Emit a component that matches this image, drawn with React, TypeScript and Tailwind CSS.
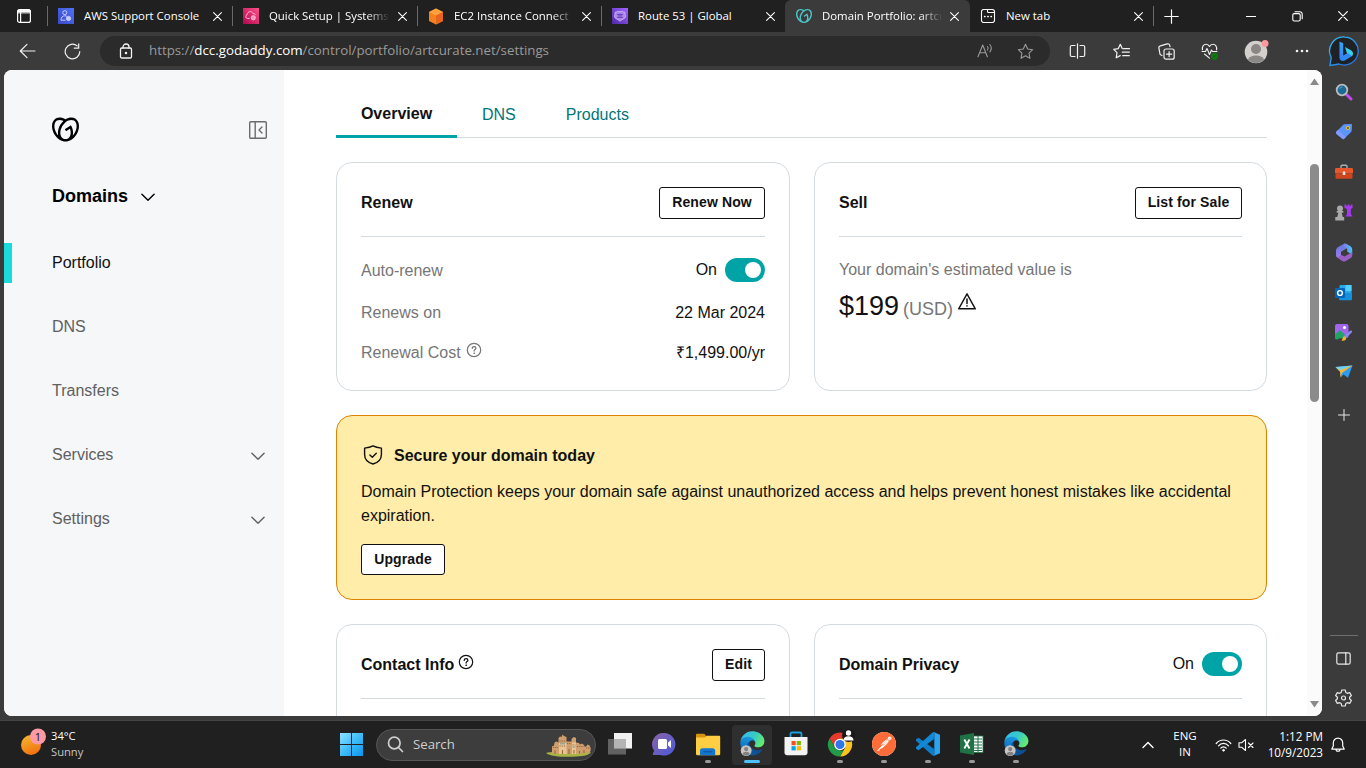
import React from "react";
import { SiGodaddy, SiPostman } from "react-icons/si";

type P = { children?: React.ReactNode; className?: string };

function Svg({ w, h, vb, children, className = "", sw = 1.2 }: P & { w: number; h: number; vb?: string; sw?: number }) {
  return (
    <svg
      width={w}
      height={h}
      viewBox={vb ?? `0 0 ${w} ${h}`}
      fill="none"
      stroke="currentColor"
      strokeWidth={sw}
      strokeLinecap="round"
      strokeLinejoin="round"
      className={`shrink-0 ${className}`}
    >
      {children}
    </svg>
  );
}

const Cell = ({ children, className = "" }: P) => (
  <div className={`flex shrink-0 items-center justify-center ${className}`}>{children}</div>
);

/* ---------- browser tabs ---------- */

const SupportIcon = () => (
  <svg width="16" height="16" className="shrink-0">
    <defs>
      <linearGradient id="sup" x1="0" y1="1" x2="1" y2="0">
        <stop offset="0" stopColor="#3b48cc" />
        <stop offset="1" stopColor="#4d72f3" />
      </linearGradient>
    </defs>
    <rect width="16" height="16" fill="url(#sup)" />
    <g fill="none" stroke="#c3ccfb" strokeWidth="1">
      <circle cx="6.8" cy="4.6" r="2" />
      <path d="M3 12.2c0-3 1.6-4.4 3.8-4.4 1 0 1.800.2 2.200.7M3 12.200h4.500" />
      <circle cx="10.500" cy="10.500" r="2.100" fill="#c3ccfb" />
    </g>
  </svg>
);

const SystemsIcon = () => (
  <svg width="16" height="16" className="shrink-0">
    <defs>
      <linearGradient id="sys" x1="0" y1="1" x2="1" y2="0">
        <stop offset="0" stopColor="#b0084d" />
        <stop offset="1" stopColor="#ff4f8b" />
      </linearGradient>
    </defs>
    <rect width="16" height="16" fill="url(#sys)" />
    <g fill="none" stroke="#ffb8d0" strokeWidth="1">
      <path d="M6.500 10.500H4.600a2 2 0 0 1-.4-3.900c.1-3.400 4.800-4 5.700-1 1.500-.5 2.300.5 2.300 1.500" />
      <circle cx="10.300" cy="9.800" r="2.100" fill="#f596b9" />
    </g>
  </svg>
);

const Ec2Icon = () => (
  <svg width="16" height="17" viewBox="0 0 16 17" className="shrink-0">
    <path d="M8 .5 15 4v9l-7 3.500L1 13V4z" fill="#f58220" />
    <path d="M8 .5 15 4 8 7.400 1 4z" fill="#ffa13d" />
    <path d="M8 7.400 15 4v9l-7 3.500z" fill="#e8651f" />
  </svg>
);

const RouteIcon = () => (
  <svg width="16" height="16" className="shrink-0">
    <defs>
      <linearGradient id="r53" x1="0" y1="1" x2="1" y2="0">
        <stop offset="0" stopColor="#4d27a8" />
        <stop offset="1" stopColor="#a166ff" />
      </linearGradient>
    </defs>
    <rect width="16" height="16" fill="url(#r53)" />
    <path d="M3 4.200c1.300.3 2-.2 2.600-1.100 1.500.7 3.300.7 4.800 0 .6.900 1.300 1.400 2.600 1.100-.6 1.500.7 2.600.5 4.300-.2 2.300-3.500 2.600-5.500 4.700-2-2.100-5.300-2.400-5.500-4.700C2.300 6.800 3.600 5.700 3 4.200z" fill="#a987e6" stroke="#d3c0f7" strokeWidth=".8" />
    <path d="M5.200 6.400h5.600M5.200 9.400h5.600M6 7.900h4" stroke="#6336b8" strokeWidth=".9" />
  </svg>
);

const NewTabIcon = () => (
  <Svg w={16} h={16} className="text-white" sw={1.1}>
    <rect x="1.500" y="1.500" width="13" height="13" rx="2.200" />
    <path d="M7.500 1.800v1.700c0 .7.400 1 1 1h6" />
    <path d="M4.700 8.500h.2M7.900 8.500h.2M11.100 8.500h.2" strokeWidth="1.700" />
  </Svg>
);

type TabItem = { icon: React.ReactNode; title: string; width: string; gap: string; lead?: string; active?: boolean; fade?: boolean; sep?: boolean };

const tabs: TabItem[] = [
  { icon: <SupportIcon />, title: "AWS Support Console", width: "w-[185px]", gap: "ml-[9px]", sep: true },
  { icon: <SystemsIcon />, title: "Quick Setup | Systems", width: "w-[185px]", gap: "ml-[9px]", fade: true, sep: true },
  { icon: <Ec2Icon />, title: "EC2 Instance Connect |", width: "w-[184px]", gap: "ml-[8px]", fade: true, sep: true },
  { icon: <RouteIcon />, title: "Route 53 | Global", width: "w-[184px]", gap: "ml-[8px]", sep: true },
  { icon: <SiGodaddy size={16} color="#4cc5c9" className="shrink-0" />, title: "Domain Portfolio: artcu", width: "w-[185px]", gap: "ml-[8px]", active: true, fade: true },
  { icon: <NewTabIcon />, title: "New tab", width: "w-[183px]", gap: "ml-[8px]", lead: "ml-[9px]" },
];

const Close = ({ s = 9 }: { s?: number }) => (
  <Svg w={s} h={s} vb="0 0 9 9" className="text-white" sw={1.1}>
    <path d="M.6.6l7.800 7.800M8.400.6.6 8.400" />
  </Svg>
);

const TabStrip = () => (
  <div className="flex h-8 shrink-0 items-stretch bg-[#202020] text-white">
    <Cell className="w-[47px]">
      <Svg w={16} h={16} sw={1.200}>
        <rect x="1.600" y="1.600" width="12.800" height="12.800" rx="2" />
        <path d="M1.600 4.600V3.600a2 2 0 0 1 2-2h8.800a2 2 0 0 1 2 2v1z" fill="currentColor" strokeWidth=".8" />
        <path d="M4.600 4v10.400" />
      </Svg>
    </Cell>
    {tabs.map((t) => (
      <div
        key={t.title}
        className={`flex shrink-0 items-center ${t.width} ${t.active ? "rounded-t-md bg-[#3b3b3b]" : ""}`}
      >
        <div className={`h-[20px] w-px ${t.sep ? "bg-[#6a6a6a]" : ""}`} />
        <Cell className={`w-4 ${t.lead ?? "ml-[10px]"}`}>{t.icon}</Cell>
        <div
          className={`ml-[10px] w-[120px] whitespace-nowrap text-[11.400px] leading-4 ${
            t.fade ? "[mask-image:linear-gradient(to_right,black_98px,transparent_121px)]" : ""
          }`}
        >
          {t.title}
        </div>
        <div className={t.gap}>
          <Close />
        </div>
      </div>
    ))}
    <div className="h-[20px] w-px self-center bg-[#6a6a6a]" />
    <Cell className="w-[35px]">
      <Svg w={15} h={15} sw={1.200}>
        <path d="M7.500.8v13.400M.8 7.500h13.400" />
      </Svg>
    </Cell>
    <div className="flex-1" />
    <Cell className="w-[46px]">
      <Svg w={10} h={10} sw={1}>
        <path d="M0 5.500h10" />
      </Svg>
    </Cell>
    <Cell className="w-[46px]">
      <Svg w={11} h={11} sw={1.100}>
        <rect x=".8" y="2.600" width="7.400" height="7.400" rx="1.500" />
        <path d="M3 .7h4.800a2.400 2.400 0 0 1 2.400 2.400v4.700" />
      </Svg>
    </Cell>
    <Cell className="w-[46px]">
      <Close s={10} />
    </Cell>
  </div>
);

/* ---------- toolbar ---------- */

const star = "M8.500 1.300l2.200 4.700 5 .7-3.700 3.500.9 5.100-4.400-2.500-4.500 2.500.9-5.100L1.300 6.700l5-.7z";

const Bing = () => (
  <svg width="32" height="32" viewBox="0 0 32 32" className="shrink-0">
    <defs>
      <linearGradient id="bg1" x1="0" y1="0" x2="1" y2="1">
        <stop offset="0" stopColor="#35c7f4" />
        <stop offset="1" stopColor="#2364e0" />
      </linearGradient>
      <linearGradient id="bg2" x1="0" y1="0" x2="0" y2="1">
        <stop offset="0" stopColor="#31a8f5" />
        <stop offset="1" stopColor="#3f7af5" />
      </linearGradient>
    </defs>
    <path d="M16.500 2a14 14 0 1 1-5.500 27L2 30.500l1.200-8A14 14 0 0 1 16.500 2z" fill="#202124" stroke="url(#bg1)" strokeWidth="1.300" />
    <path d="M11.500 6.500l3.700 1.800V21l-1.700 4.500c-1.300-.6-2-1.500-2-3z" fill="url(#bg2)" />
    <path d="M17 12l6 3.200c2.800 1.800 2.300 4.500.8 6L19 18.500z" fill="#35d0e8" />
    <path d="M11.800 22.500l7.700-4.400 4.300 3.100-7 4.300c-2.400 1.200-4.600.2-5-3z" fill="#3188f5" />
  </svg>
);

const Toolbar = () => (
  <div className="flex h-[38px] shrink-0 items-center bg-[#3b3b3b] text-[#f2f2f2]">
    <Cell className="w-[44px] pl-[11px]">
      <Svg w={17} h={16} sw={1.200}>
        <path d="M16 8H1.500M8 1.300 1.300 8 8 14.700" />
      </Svg>
    </Cell>
    <Cell className="w-[56px]">
      <Svg w={17} h={17} sw={1.200}>
        <path d="M15.800 8.500A7.300 7.300 0 1 1 13.200 2.900M14.700.8v4.400h-4.400" />
      </Svg>
    </Cell>
    <div className="flex h-[30px] w-[950px] items-center rounded-full bg-[#2b2b2b]">
      <Cell className="w-[49px] pl-[3px]">
        <Svg w={14} h={16} sw={1.300}>
          <rect x="1.500" y="5" width="11" height="10" rx="1.200" />
          <path d="M4 5V4a3 3 0 0 1 6 0v1" />
          <circle cx="7" cy="10" r=".6" fill="currentColor" />
        </Svg>
      </Cell>
      <div className="flex-1 whitespace-nowrap text-[13.300px] text-[#9a9a9a]">
        https://<span className="text-white">dcc.godaddy.com</span>/control/portfolio/artcurate.net/settings
      </div>
      <Cell className="w-[40px] text-[#9a9a9a]">
        <Svg w={17} h={16} sw={1.100}>
          <path d="M1 13.800 5.700 2l4.700 11.800M2.700 9.800h6M10.500 3.500c.9 1 .9 2.300 0 3.500M12.800 1.500c1.900 2.200 1.900 4.900.1 7.300" />
        </Svg>
      </Cell>
      <Cell className="mr-[5px] w-[40px] text-[#9a9a9a]">
        <Svg w={17} h={17} sw={1.100}>
          <path d={star} />
        </Svg>
      </Cell>
    </div>
    <Cell className="ml-[5px] w-[44px]">
      <Svg w={17} h={16} sw={1.200}>
        <path d="M6 2.500H2.800C1.800 2.500 1.300 3 1.300 4v8c0 1 .5 1.500 1.500 1.500H6M11 2.500h3.200c1 0 1.500.5 1.500 1.500v8c0 1-.5 1.500-1.500 1.500H11M8.500.8v14.400" />
      </Svg>
    </Cell>
    <Cell className="w-[45px]">
      <Svg w={17} h={17} sw={1.200}>
        <path d="M9.300 5.700 7.300 1.300 5.200 5.700l-4.500.7 3.300 3.200-.8 5.200 4-2.200M10.500 5.700h6M9.300 9.200h7M9.700 12.700h6.600" />
      </Svg>
    </Cell>
    <Cell className="w-[44px]">
      <Svg w={17} h={17} sw={1.200}>
        <rect x="6" y="6" width="10.200" height="10.200" rx="2" />
        <path d="M11.100 8.500v5.200M8.500 11.100h5.200M4 12.500 3 12a2 2 0 0 1-1.200-2.200L.9 5.200a2 2 0 0 1 1.500-2.400l6.800-1.900a2 2 0 0 1 2.500 1.400l.3 1.300" />
      </Svg>
    </Cell>
    <Cell className="w-[44px]">
      <Svg w={18} h={17} sw={1.100}>
        <path d="M1.500 6.800C.8 3.700 2.600 1.300 5 1.300c1.600 0 2.900 1 3.500 2.200.6-1.200 1.900-2.200 3.500-2.200 2.400 0 4.200 2.400 3.500 5.500M1 8.500h3.500l1.500-3 2.500 6 2-4.500 1 1.500H16M3.500 11l5 4.200" />
        <circle cx="13.500" cy="13.200" r="3.500" fill="#0f7b0f" stroke="none" />
        <path d="M11.900 13.200l1.200 1.200 2-2.200" strokeWidth=".8" stroke="#3b3b3b" />
      </Svg>
    </Cell>
    <Cell className="w-[48px]">
      <svg width="25" height="25" viewBox="0 0 25 25">
        <circle cx="12" cy="13" r="11.300" fill="#d2cfcc" />
        <circle cx="12" cy="10" r="5" fill="#8b8785" />
        <path d="M4 20.500c1.500-3 4.300-4 8-4s6.500 1 8 4a11 11 0 0 1-16 0z" fill="#8b8785" />
        <circle cx="21" cy="4.500" r="3.500" fill="#ff9a9e" />
      </svg>
    </Cell>
    <Cell className="w-[44px]">
      <svg width="14" height="4" fill="#f2f2f2">
        <circle cx="2" cy="2" r="1.300" />
        <circle cx="7" cy="2" r="1.300" />
        <circle cx="12" cy="2" r="1.300" />
      </svg>
    </Cell>
    <Cell className="w-[40px]">
      <Bing />
    </Cell>
  </div>
);

/* ---------- page ---------- */

const Chevron = ({ className = "" }: P) => (
  <Svg w={14} h={9} sw={1.400} className={className}>
    <path d="M.9 1.200 7 7.300l6.100-6.100" />
  </Svg>
);

const Toggle = () => (
  <div className="flex h-6 w-10 items-center justify-end rounded-full bg-[#00a4a6] pr-1">
    <div className="size-4 rounded-full bg-white" />
  </div>
);

const OnToggle = () => (
  <div className="flex items-center gap-2">
    <span>On</span>
    <Toggle />
  </div>
);

const Btn = ({ children, className = "h-8" }: P) => (
  <button className={`flex items-center justify-center rounded-[3px] border border-[#111] bg-white pb-[2px] text-[14px] font-bold tracking-[0.12px] ${className}`}>
    {children}
  </button>
);

const Help = ({ className = "" }: P) => (
  <Svg w={16} h={16} className={className} sw={1.200}>
    <circle cx="8" cy="8" r="6.700" />
    <path d="M6.200 6.400c.1-1.100.8-1.700 1.900-1.700 1 0 1.800.6 1.800 1.500 0 1.400-1.800 1.400-1.800 2.900" strokeWidth="1.300" />
    <circle cx="8.100" cy="11.200" r=".5" fill="currentColor" strokeWidth=".6" />
  </Svg>
);

const navItems = [
  { label: "Portfolio", active: true },
  { label: "DNS" },
  { label: "Transfers" },
  { label: "Services", more: true },
  { label: "Settings", more: true },
];

const Nav = () => (
  <aside className="flex w-[280px] shrink-0 flex-col bg-[#f5f7f8]">
    <div className="mt-[48px] flex h-6 items-center justify-between pl-[48px] pr-[16px]">
      <SiGodaddy size={27} color="#000" className="-mt-px" />
      <Svg w={20} h={20} sw={1.400} className="text-[#6b6b6b]">
        <rect x="1.700" y="1.700" width="16.600" height="16.600" rx="1" />
        <path d="M7.200 1.700v16.600M14 7l-3 3 3 3" />
      </Svg>
    </div>
    <div className="mt-[42px] flex h-6 items-center gap-[13px] pl-[48px] text-[18px] font-bold text-black">
      Domains
      <Chevron className="mt-[2px]" />
    </div>
    <div className="mt-[35px] flex flex-col gap-6">
      {navItems.map((n) => (
        <div key={n.label} className="flex h-10 items-center">
          <div className={`h-10 w-2 ${n.active ? "bg-[#1bdbdb]" : ""}`} />
          <div className={`flex flex-1 items-center justify-between pl-10 pr-[19px] ${n.active ? "text-[#111]" : "text-[#5f6062]"}`}>
            {n.label}
            {n.more && <Chevron className="mt-[3px]" />}
          </div>
        </div>
      ))}
    </div>
  </aside>
);

const Card = ({ children, className = "" }: P) => (
  <section className={`flex flex-col rounded-2xl border border-[#d4dbe0] bg-white px-6 pt-6 ${className}`}>{children}</section>
);

const CardHead = ({ title, children }: { title: React.ReactNode; children: React.ReactNode }) => (
  <div className="flex h-[50px] shrink-0 items-start justify-between border-b border-[#d4dbe0]">
    <h2 className="flex h-8 items-center gap-1 font-bold">{title}</h2>
    {children}
  </div>
);

const Page = () => (
  <main className="flex min-w-0 flex-1 flex-col bg-white pl-[52px]">
    <div className="mt-[20px] flex h-[48px] w-[931px] shrink-0 border-b border-[#d4dbe0] text-[#00767a]">
      <div className="-mb-px flex w-[121px] items-center justify-center border-b-[3px] border-[#00a4a6] pt-[3px] font-bold text-[#111]">Overview</div>
      <div className="flex items-center pl-[25px] pt-[2px]">DNS</div>
      <div className="flex items-center pl-[50px] pt-[2px]">Products</div>
    </div>

    <div className="mt-6 flex w-[931px] shrink-0 gap-6">
      <Card className="h-[229px] w-[454px]">
        <CardHead title="Renew">
          <Btn className="h-8 w-[106px]">Renew Now</Btn>
        </CardHead>
        <div className="mt-[21px] flex h-6 items-center justify-between">
          <span className="pt-[2px] text-[#767676]">Auto-renew</span>
          <OnToggle />
        </div>
        <div className="mt-[19px] flex h-6 items-center justify-between">
          <span className="text-[#767676]">Renews on</span>
          <span>22 Mar 2024</span>
        </div>
        <div className="mt-4 flex h-6 items-center justify-between">
          <span className="flex items-center gap-[5px] text-[#767676]">
            Renewal Cost
            <Help className="-mt-[6px]" />
          </span>
          <span>₹1,499.00/yr</span>
        </div>
      </Card>
      <Card className="h-[229px] w-[453px]">
        <CardHead title="Sell">
          <Btn className="h-8 w-[107px]">List for Sale</Btn>
        </CardHead>
        <div className="mt-[21px] flex h-6 items-center text-[#767676]">Your domain's estimated value is</div>
        <div className="mt-[4px] flex h-10 items-baseline">
          <span className="text-[27px] leading-10">$199</span>
          <span className="ml-1 text-[18px] text-[#767676]">(USD)</span>
          <Svg w={20} h={19} sw={1.400} className="relative -top-1 ml-1">
            <path d="M10 1.800 18.300 16.800H1.700z" />
            <path d="M10 7v4.600M10 13.700v.4" strokeWidth="1.500" />
          </Svg>
        </div>
      </Card>
    </div>

    <section className="mt-6 flex h-[185px] w-[931px] shrink-0 flex-col rounded-2xl border border-[#dd8100] bg-[#ffeda9] px-6 pt-[27px]">
      <div className="flex h-6 items-center gap-[11px] pl-[2px]">
        <Svg w={20} h={20} sw={1.400}>
          <path d="M10 .9c2.300 1.300 5 1.900 8.400 2.200v6.400c0 4.900-3.700 8.200-8.400 9.500-4.700-1.300-8.400-4.600-8.400-9.500V3.100C5 2.800 7.700 2.200 10 .9z" />
          <path d="M6.900 9.900l2.400 2.400 4-4" />
        </Svg>
        <h2 className="pt-[2px] font-bold">Secure your domain today</h2>
      </div>
      <p className="mt-[13px] leading-6">
        Domain Protection keeps your domain safe against unauthorized access and helps prevent honest mistakes like accidental expiration.
      </p>
      <Btn className="mt-4 h-[31px] w-[84px]">Upgrade</Btn>
    </section>

    <div className="mt-6 flex w-[931px] shrink-0 gap-6">
      <Card className="h-[229px] w-[454px]">
        <CardHead title={<>Contact Info<Help className="-mt-[6px]" /></>}>
          <Btn className="h-8 w-[53px]">Edit</Btn>
        </CardHead>
      </Card>
      <Card className="h-[229px] w-[453px]">
        <CardHead title="Domain Privacy">
          <div className="pt-[3px]">
            <OnToggle />
          </div>
        </CardHead>
      </Card>
    </div>
  </main>
);

const Scrollbar = () => (
  <div className="flex w-[15px] shrink-0 flex-col items-center bg-[#fbfbfb]">
    <svg width="9" height="7" className="mt-[8px]">
      <path d="M4.500.5 9 7H0z" fill="#8a8a8a" />
    </svg>
    <div className="mt-[79px] h-[238px] w-[9px] rounded-full bg-[#8b8b8b]" />
    <div className="flex-1" />
    <svg width="9" height="7" className="mb-[8px]">
      <path d="M4.500 6.500 9 0H0z" fill="#8a8a8a" />
    </svg>
  </div>
);

/* ---------- browser side rail ---------- */

const railIcons: React.ReactNode[] = [
  <svg width="18" height="18">
    <path d="M11.500 11.500l4.500 4.500" stroke="#c04af0" strokeWidth="3" strokeLinecap="round" />
    <circle cx="7" cy="7" r="5.300" fill="#1c6a94" stroke="#b9bcbe" strokeWidth="1.800" />
    <path d="M4.500 6a3 3 0 0 1 3-2" stroke="#49a5cf" fill="none" />
  </svg>,
  <svg width="18" height="18">
    <path d="M9.500 1.300 16 1c.7 0 1 .5 1 1l-.3 5.500c0 .6-.2 1-.6 1.400l-6.700 6.700c-.7.700-1.600.7-2.300 0L1.500 11c-.7-.8-.7-1.700 0-2.400L8 2c.4-.4.9-.6 1.500-.7z" fill="#5c94ff" />
    <path d="M1.500 11c-.7-.8-.7-1.700 0-2.400L3 7l8 7-1.600 1.600c-.7.700-1.600.7-2.300 0z" fill="#8298fb" />
    <circle cx="13" cy="5" r="1.500" fill="#4a4520" stroke="#e8cc23" strokeWidth="1.200" />
  </svg>,
  <svg width="18" height="16">
    <path d="M6 4V2.500C6 1.700 6.500 1.200 7.300 1.200h3.400c.8 0 1.300.5 1.300 1.300V4" fill="none" stroke="#a7b0b6" strokeWidth="1.400" />
    <rect x="0" y="4" width="18" height="5.500" rx="1.200" fill="#e8562c" />
    <path d="M.5 9.500h17v4c0 .8-.5 1.300-1.300 1.300H1.800c-.8 0-1.300-.5-1.300-1.300z" fill="#cf451e" />
    <rect x="7.700" y="7.500" width="2.600" height="3.500" rx=".6" fill="#e6e6e6" />
  </svg>,
  <svg width="19" height="19">
    <path d="M10.500 1.500h1.800v1.500h1.400V1.500h1.800v1.500h1.300V1.500h1.700V5l-1.600 1v5l1.700 2.500h-7L13 11V6l-2.500-1z" fill="#a638ee" />
    <g fill="#a9a9a9">
      <circle cx="6" cy="5.500" r="3" />
      <rect x="2.500" y="8" width="7" height="1.700" rx=".8" />
      <path d="M4.500 9h3l1.300 5h1.400v3.500H1.300V14h2z" />
    </g>
  </svg>,
  <svg width="18" height="19">
    <defs>
      <linearGradient id="m1" x1="0" y1="0" x2="1" y2="0">
        <stop offset="0" stopColor="#7f7be8" />
        <stop offset="1" stopColor="#45c3f7" />
      </linearGradient>
      <linearGradient id="m2" x1="0" y1="0" x2="0" y2="1">
        <stop offset="0" stopColor="#5b7be0" />
        <stop offset="1" stopColor="#a07be8" />
      </linearGradient>
    </defs>
    <path d="M9.500.6 3.200 4C1.700 5 1 6.200 1 8v4c0 1.300.6 2.200 1.600 2.800L6 13V8.800l5-3z" fill="url(#m2)" />
    <path d="M9 .8c1-.5 1.800-.3 2.700.2L15.500 3.200c1.200.8 1.700 1.800 1.700 3.200v5l-5-2.600V6L8 3.300z" fill="url(#m1)" />
    <path d="M2 14.500 6.500 12l3 1.600 7.700-4.600v3.200c0 1.400-.6 2.300-1.800 3l-4.600 2.700c-1.200.7-2.300.7-3.500 0z" fill="#9a5fc4" />
  </svg>,
  <svg width="18" height="17">
    <rect x="4.500" y="1" width="12" height="13" rx="1" fill="#28a8ea" />
    <rect x="10.500" y="1" width="6" height="6" fill="#50d0ff" />
    <path d="M4 9h13v6c0 .8-.5 1.300-1.300 1.300H5.300C4.500 16.300 4 15.800 4 15z" fill="#1490df" />
    <rect x="0" y="4" width="10" height="10" rx="1" fill="#0364b8" />
    <circle cx="5" cy="9" r="2.400" fill="none" stroke="#fff" strokeWidth="1.400" />
  </svg>,
  <svg width="19" height="19">
    <rect x="1" y="1" width="13.500" height="14" rx="2" fill="#a067ea" />
    <circle cx="10.500" cy="4.500" r="1.500" fill="#fff" />
    <path d="M1 11.500 5 8c.8-.6 1.600-.6 2.300 0l5.500 6c-3 2.500-6 .5-8 1.800-1.500 1-3.300.7-3.800-.3z" fill="#21a366" />
    <path d="M17.500 7.500c.9.5.8 1.300.2 2l-5.500 5.500-2-1.900 5.500-5c.6-.6 1.200-.9 1.800-.6z" fill="#8d84f0" />
    <path d="M10.200 13.100l2 1.900c.1 2-1.700 3.300-4.700 2.600 1.200-.9.900-3.400 2.700-4.500z" fill="#f5b32c" />
  </svg>,
  <svg width="18" height="14">
    <path d="M.5 2 17.500.5 13 12.800 8.500 9.500 5.800 12.500 5.500 7z" fill="#2e9df0" />
    <path d="M.5 2 17.500.5 5.500 7z" fill="#6ed2fa" />
    <path d="M.5 2 5 6.500 5.500 12.500 7 8 17.500.5 5.300 5z" fill="#f2b93a" />
  </svg>,
];

const Rail = () => (
  <div className="flex w-[44px] shrink-0 flex-col items-center bg-[#3b3b3b] pr-px pt-[2px] text-[#e8e8e8]">
    {railIcons.map((icon, i) => (
      <Cell key={i} className="h-10 w-10">
        {icon}
      </Cell>
    ))}
    <Cell className="h-[46px] w-10">
      <Svg w={12} h={12} sw={1}>
        <path d="M6 .5v11M.5 6h11" />
      </Svg>
    </Cell>
    <div className="mt-auto h-px w-[28px] shrink-0 bg-[#6e6e6e]" />
    <Cell className="mt-[2px] h-10 w-10">
      <Svg w={15} h={13} sw={1.200}>
        <rect x=".8" y=".8" width="13.400" height="11.400" rx="1.800" />
        <path d="M9.800.8v11.400" />
      </Svg>
    </Cell>
    <Cell className="-mb-[2px] h-10 w-10">
      <Svg w={17} h={18} vb="0 0 17 18" sw={1.200}>
        <path d="M6.800 1h3.400l.6 2.400 1.500.9 2.400-.7 1.700 2.900-1.800 1.700v1.600l1.800 1.700-1.700 2.900-2.400-.7-1.500.9-.6 2.400H6.800l-.6-2.400-1.500-.9-2.400.7-1.700-2.900 1.800-1.700V8.200L.6 6.500l1.700-2.900 2.400.7 1.500-.9z" />
        <circle cx="8.500" cy="9" r="2" />
      </Svg>
    </Cell>
  </div>
);

/* ---------- taskbar ---------- */

const Edge = () => (
  <svg width="26" height="26" viewBox="0 0 276 276">
    <defs>
      <linearGradient id="e1" x1="0" y1="0" x2="1" y2="0">
        <stop offset="0" stopColor="#0c59a4" />
        <stop offset="1" stopColor="#114a8b" />
      </linearGradient>
      <linearGradient id="e2" x1="0.6" y1="0" x2="0.300" y2="1">
        <stop offset="0" stopColor="#1b9de2" />
        <stop offset="1" stopColor="#0a5fb5" />
      </linearGradient>
      <linearGradient id="e3" x1="0" y1="0.200" x2="1" y2="0.600">
        <stop offset="0" stopColor="#35c1f1" />
        <stop offset="0.500" stopColor="#36c9c8" />
        <stop offset="1" stopColor="#66eb6e" />
      </linearGradient>
    </defs>
    <g transform="translate(14 2)">
      <path fill="url(#e1)" d="M231.070 190.540a101 101 0 0 1-10.520 4.680 101.900 101.900 0 0 1-35.910 6.460c-47.320 0-88.540-32.550-88.540-74.320a31.480 31.480 0 0 1 16.430-27.310c-42.800 1.800-53.800 46.400-53.800 72.530 0 73.880 68.090 81.370 82.760 81.370 7.910 0 19.840-2.300 27-4.560l1.310-.44a128.340 128.340 0 0 0 66.600-52.800 4 4 0 0 0-5.330-5.610z" />
      <path fill="url(#e2)" d="M105.730 241.420a79.200 79.200 0 0 1-22.740-21.340 80.720 80.720 0 0 1 29.530-120.030c3.120-1.470 8.450-4.130 15.540-4a32.350 32.350 0 0 1 25.690 13 31.880 31.880 0 0 1 6.360 18.660c0-.21 24.460-79.600-80-79.600-43.900 0-80 41.660-80 78.210a130.150 130.150 0 0 0 12.110 56 128 128 0 0 0 156.380 67.110 75.550 75.550 0 0 1-62.870-8.010z" />
      <path fill="url(#e3)" d="M152.330 148.860c-.81 1.050-3.300 2.500-3.300 5.660 0 2.610 1.700 5.120 4.720 7.230 14.380 10 41.490 8.680 41.560 8.680a59.560 59.560 0 0 0 30.270-8.350A61.380 61.380 0 0 0 256 109.100c.26-22.410-8-37.310-11.340-43.910C223.460 23.840 177.720 0 128 0A128 128 0 0 0 0 126.200c.48-36.540 36.800-66.050 80-66.050 3.500 0 23.460.34 42 10.070 16.340 8.580 24.900 18.940 30.850 29.210 6.180 10.670 7.280 24.150 7.280 29.520s-2.740 13.330-7.800 19.910z" />
    </g>
    <circle cx="76" cy="208" r="58" fill="#c9c7c6" />
    <circle cx="76" cy="192" r="23" fill="#858180" />
    <path d="M38 244c4-32 72-32 76 0-20 24-56 24-76 0z" fill="#858180" />
  </svg>
);

const Chrome = () => (
  <svg width="30" height="30" viewBox="0 0 30 30">
    <path d="M4.600 9.400A12 12 0 0 1 25.400 9.400L15 9.500l-5.200 9z" fill="#e33b2e" />
    <path d="M25.400 9.400A12 12 0 0 1 15 27.500l5.200-9L15 9.500z" fill="#fcc31e" />
    <path d="M4.600 9.400 9.800 18.500 15 21.500h3.500L15 27.500A12 12 0 0 1 4.600 9.400z" fill="#229a48" />
    <circle cx="15" cy="15.500" r="5.800" fill="#fff" />
    <circle cx="15" cy="15.500" r="4.500" fill="#2f76e8" />
    <circle cx="23.500" cy="6.500" r="6.500" fill="#181818" />
    <circle cx="23.500" cy="4" r="2.700" fill="#fff" />
    <path d="M18.500 11.500c0-3 2-4.200 5-4.200s5 1.200 5 4.200z" fill="#fff" />
  </svg>
);

const Castle = () => (
  <svg width="48" height="24" viewBox="0 0 48 24">
    <path d="M1 20c7-1.500 38-2 45-.5-3 3.500-12 4.300-22 4.300S4 23 1 20z" fill="#a8b545" />
    <path d="M7 21V13.500l2-1 .5-3 2-1 2 1V5L15 3.500l1.500.5 1-2.500L19 3l2.500 1v4.500h5V6l1.500-1.500 1-.5L31 5v4.500l3 .5 1 1.500 2-1 2 1.500 1 2 1.500-1 1-1.500 2 1c1.500 2 1.700 5 .3 7-8 1.500-28 2-38 .5z" fill="#cf9e6c" />
    <path d="M14 10h7.500v11H14zM27 9.500h4V21h-4z" fill="#e9c595" />
    <path d="M8 14.500h5M14.500 8h6M22 10.500h4.500M32 13.500h7M14.500 13h6M27.500 12h3M41 15h4" stroke="#87613f" strokeWidth=".9" strokeDasharray="1.200 1" />
    <path d="M10 21v-3.500M17.500 21v-4M24 21v-5M29 20.500V17M34.500 20.500V18M39 20v-3" stroke="#95683f" strokeWidth="1.100" />
    <path d="M15 10.800h5M27.500 14h3" stroke="#5f9a98" strokeWidth=".9" />
  </svg>
);

const Folder = () => (
  <svg width="26" height="26" viewBox="0 0 26 26">
    <path d="M1 4c0-.8.5-1.300 1.300-1.300h6c.8 0 1.500.4 2 1L11.500 6v3H1z" fill="#d9920f" />
    <path d="M1 6.500h9l1.500-1.700H24c.7 0 1.200.5 1.200 1.200v17c0 .7-.5 1.200-1.200 1.200H2.200c-.7 0-1.200-.5-1.200-1.200z" fill="#ffce42" />
    <path d="M5 24.200v-4.500C5 18 6 17.200 7.500 17.200h10c1.700 0 2.700.9 2.700 2.500v4.500z" fill="#1377d1" />
    <path d="M8.500 20.700h8.500" stroke="#0c59a4" strokeWidth="1.500" />
  </svg>
);

const Store = () => (
  <svg width="26" height="26" viewBox="0 0 26 26">
    <path d="M7.500 6.500V3c0-1 .5-1.500 1.500-1.500h8c1 0 1.500.5 1.500 1.500v3.500" fill="none" stroke="#1ba0dc" strokeWidth="1.800" />
    <path d="M1.500 6h23v15.500c0 1.800-1 2.700-2.700 2.700H4.200c-1.700 0-2.700-.9-2.700-2.700z" fill="#f3f3f3" />
    <path d="M8.500 10h4.200v4.200H8.500z" fill="#f25022" />
    <path d="M13.700 10h4.200v4.200h-4.200z" fill="#7fba00" />
    <path d="M8.500 15.200h4.200v4.200H8.500z" fill="#00a4ef" />
    <path d="M13.700 15.200h4.200v4.200h-4.200z" fill="#ffb900" />
  </svg>
);

const Code = () => (
  <svg width="26" height="26" viewBox="0 0 26 26">
    <path d="M18.800 17.800 3.500 6.800 1 8.300v1.500L17.500 24.500l1.800.4z" fill="#0f7dc9" />
    <path d="M18.800 8.200 3.500 19.200 1 17.700v-1.500L17.500 1.500l1.800-.4z" fill="#1288d6" />
    <path d="M18.500.9 25 3.800v18.400l-6.500 2.900c.5-.4.800-1 .8-1.700V2.600c0-.7-.3-1.300-.8-1.700z" fill="#2aa3f3" />
  </svg>
);

const Excel = () => (
  <svg width="24" height="24" viewBox="0 0 24 24">
    <rect x="11" y="4" width="12" height="16.500" fill="#fff" stroke="#1f7244" strokeWidth=".8" />
    <path d="M13 7h9M13 10h9M13 13h9M13 16h9M13 18.500h9M18 4v16" stroke="#1f7244" strokeWidth="1" />
    <path d="M0 3.500 14 1v22L0 20.500z" fill="#1f7244" />
    <path d="M4.300 7.500l5.200 9M9.500 7.500l-5.200 9" stroke="#fff" strokeWidth="1.900" />
  </svg>
);

const Chat = () => (
  <svg width="26" height="26" viewBox="0 0 26 26">
    <defs>
      <linearGradient id="ch" x1="0" y1="0" x2="1" y2="1">
        <stop offset="0" stopColor="#8a62a6" />
        <stop offset="1" stopColor="#4a5bdc" />
      </linearGradient>
    </defs>
    <path d="M13 2a11.300 11.300 0 1 1-3.500 22H2.500c-.8 0-1-.6-.7-1.200l1.400-3A11.300 11.300 0 0 1 13 2z" fill="url(#ch)" />
    <rect x="7" y="8" width="9" height="10" rx="1.500" fill="#fff" />
    <path d="M17 11.500 20 9v8l-3-2.500z" fill="#fff" />
  </svg>
);

const TaskView = () => (
  <svg width="26" height="26" viewBox="0 0 26 26">
    <rect x="7" y="2" width="18" height="15.500" fill="#f1f1f1" />
    <rect x="1" y="8" width="18" height="15.500" fill="#6f6f6f" fillOpacity=".85" />
    <rect x="7" y="8" width="12" height="9.500" fill="#b4b4b4" />
  </svg>
);

const Postman = () => (
  <div className="flex size-6 items-center justify-center rounded-full bg-white">
    <SiPostman size={24} color="#ff6c37" />
  </div>
);

const apps: { icon: React.ReactNode; dot?: boolean; active?: boolean }[] = [
  { icon: <TaskView /> },
  { icon: <Chat /> },
  { icon: <Folder />, dot: true },
  { icon: <Edge />, dot: true, active: true },
  { icon: <Store /> },
  { icon: <Chrome />, dot: true },
  { icon: <Postman />, dot: true },
  { icon: <Code />, dot: true },
  { icon: <Excel />, dot: true },
  { icon: <Edge />, dot: true },
];

const Taskbar = () => (
  <footer className="flex h-12 shrink-0 items-center border-t border-[#444] bg-[#202020] text-white">
    <div className="flex w-[339px] items-center pb-[2px] pl-[20px]">
      <svg width="26" height="28" viewBox="0 0 26 28" className="-mt-1">
        <defs>
          <linearGradient id="sun" x1="0.200" y1="0" x2="0.600" y2="1">
            <stop offset="0" stopColor="#f5b62d" />
            <stop offset="1" stopColor="#f2700f" />
          </linearGradient>
        </defs>
        <circle cx="11" cy="17" r="10" fill="url(#sun)" />
        <circle cx="18" cy="8.500" r="8" fill="#ff99a4" />
        <text x="18" y="12.500" textAnchor="middle" fontSize="11" fill="#111">1</text>
      </svg>
      <div className="ml-[5px] text-[11.200px] leading-4">
        <div>34°C</div>
        <div className="text-[#c5c5c5]">Sunny</div>
      </div>
    </div>
    <Cell className="w-[25px]">
      <svg width="23" height="23">
        <defs>
          <linearGradient id="win" x1="0" y1="0" x2="1" y2="1">
            <stop offset="0" stopColor="#8fe1ff" />
            <stop offset="0.500" stopColor="#3fbdf7" />
            <stop offset="1" stopColor="#0a93ef" />
          </linearGradient>
        </defs>
        <path d="M0 0h11v11H0zM12 0h11v11H12zM0 12h11v11H0zM12 12h11v11H12z" fill="url(#win)" />
      </svg>
    </Cell>
    <div className="ml-[12px] flex h-8 w-[220px] items-center rounded-full border border-[#565656] bg-[#3d3d3d] pl-[10px] text-[#cfcfcf]">
      <Svg w={17} h={17} sw={1.700}>
        <circle cx="7.300" cy="7" r="5.800" />
        <path d="M11.500 11.500l4 4" />
      </Svg>
      <span className="ml-[9px] flex-1 text-[13.200px]">Search</span>
      <div className="mr-[2px]">
        <Castle />
      </div>
    </div>
    <div className="ml-[4px] flex gap-1">
      {apps.map((a, i) => (
        <div key={i} className={`flex h-10 w-10 flex-col items-center rounded-[4px] pt-[6px] ${a.active ? "bg-[#2f2f2f]" : ""}`}>
          <Cell className="h-[26px] w-10">{a.icon}</Cell>
          {a.dot && <div className={`mt-[3px] h-[3px] rounded-full ${a.active ? "w-4 bg-[#4cc2ff]" : "w-[6px] bg-[#999]"}`} />}
        </div>
      ))}
    </div>
    <div className="flex-1" />
    <Svg w={12} h={8} sw={1.400}>
      <path d="M1 6.500 6 1.500l5 5" />
    </Svg>
    <div className="ml-[11px] w-[40px] pb-px text-center text-[11.500px] leading-4">
      <div>ENG</div>
      <div>IN</div>
    </div>
    <Svg w={17} h={14} sw={1.200} className="ml-[10px]">
      <path d="M1.200 5.500c4-4.700 10.600-4.700 14.600 0M3.500 7.900c2.800-3.300 7.200-3.300 10 0M5.800 10.200c1.500-1.800 3.900-1.800 5.400 0" />
      <circle cx="8.500" cy="12.300" r="1" fill="currentColor" strokeWidth=".6" />
    </Svg>
    <Svg w={17} h={14} sw={1.100} className="ml-[6px]">
      <path d="M1 4.800h2.600L7.500 1.500v11L3.600 9.200H1zM10.500 5l4.500 4.500M15 5l-4.500 4.500" />
    </Svg>
    <div className="ml-[6px] w-[62px] whitespace-nowrap pb-[2px] text-right text-[11.700px] leading-4">
      <div>1:12 PM</div>
      <div>10/9/2023</div>
    </div>
    <Svg w={16} h={16} sw={1.200} className="ml-[7px] mr-[20px]">
      <path d="M8 1.200c2.700 0 4.700 2 4.700 4.700v3.200l1.500 3H1.800l1.500-3V5.900C3.300 3.200 5.300 1.200 8 1.200zM6 12.300c0 2.600 4 2.600 4 0" />
    </Svg>
  </footer>
);

export default function App() {
  return (
    <div className="flex h-[768px] w-[1366px] flex-col overflow-hidden bg-[#3b3b3b] font-['Open_Sans','Noto_Sans',sans-serif]">
      <TabStrip />
      <Toolbar />
      <div className="flex h-[646px] shrink-0 pl-1">
        <div className="flex w-[1318px] shrink-0 overflow-hidden rounded-[8px] bg-white font-['Liberation_Sans',Arial,sans-serif] text-[16px] leading-6 text-[#111]">
          <Nav />
          <Page />
          <Scrollbar />
        </div>
        <Rail />
      </div>
      <div className="h-1 shrink-0" />
      <Taskbar />
    </div>
  );
}
